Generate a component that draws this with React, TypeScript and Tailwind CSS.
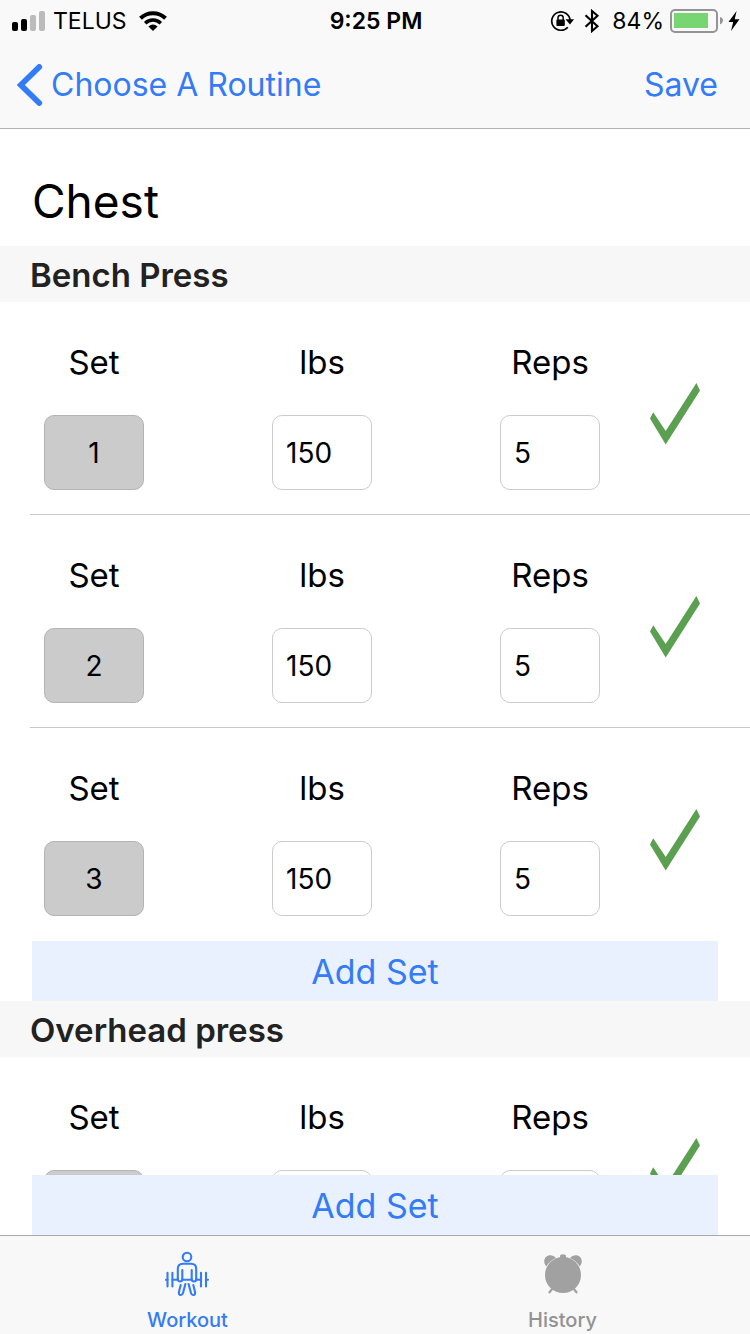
import { useId, useState } from "react";

type WorkoutSet = { weight: string; reps: string };

function SignalBars() {
  return (
    <svg className="h-5 w-[33px]" viewBox="0 0 33 20" aria-hidden="true">
      <rect x="0" y="11" width="6" height="9" rx="2" fill="#000" />
      <rect x="9" y="8" width="6" height="12" rx="2" fill="#000" />
      <rect x="18" y="4" width="6" height="16" rx="2" fill="#bbb" />
      <rect x="27" y="0" width="6" height="20" rx="2" fill="#bbb" />
    </svg>
  );
}

function WifiIcon() {
  return (
    <svg className="h-5 w-7" viewBox="0 0 28 20" fill="none" aria-hidden="true">
      <path d="M1.5 7.2 A18 18 0 0 1 26.5 7.2" stroke="#000" strokeWidth="4" />
      <path d="M6.2 12.2 A11.2 11.2 0 0 1 21.8 12.2" stroke="#000" strokeWidth="3.6" />
      <path d="M9.4 15.4 Q14 11.8 18.6 15.4 L14 20 Z" fill="#000" />
    </svg>
  );
}

function RotationLockIcon() {
  return (
    <svg className="h-[22px] w-6" viewBox="0 0 24 22" fill="none" aria-hidden="true">
      <path d="M17.8 17.2 A9.2 9.2 0 1 1 20.1 10" stroke="#000" strokeWidth="1.7" />
      <path d="M15.5 9.2 H24 L20 14.4 Z" fill="#000" />
      <rect x="6.4" y="9.5" width="8.4" height="6.5" rx="1" fill="#000" />
      <path d="M8 10 V7.8 a2.6 2.6 0 0 1 5.2 0 V10" stroke="#000" strokeWidth="1.5" />
    </svg>
  );
}

function BluetoothIcon() {
  return (
    <svg className="h-6 w-4" viewBox="0 0 16 24" fill="none" aria-hidden="true">
      <path d="M1.5 6.2 L13.5 17.3 L8 22 V2 L13.5 6.7 L1.5 17.8" stroke="#000" strokeWidth="2.1" />
    </svg>
  );
}

function BatteryIcon() {
  return (
    <svg className="h-6 w-[54px]" viewBox="0 0 54 24" fill="none" aria-hidden="true">
      <rect x="1" y="1" width="46" height="22" rx="4" stroke="#949494" strokeWidth="2" />
      <rect x="4" y="4" width="34" height="15" fill="#77d572" />
      <path d="M50 8 Q53 9 53 11.5 Q53 14 50 15.4 Z" fill="#949494" />
    </svg>
  );
}

function BoltIcon() {
  return (
    <svg className="h-5 w-3" viewBox="0 0 12 20" aria-hidden="true">
      <path d="M8.6 0 L0.5 11 H5.2 L3 20 L11.5 8.2 H6.7 Z" fill="#000" />
    </svg>
  );
}

function CheckIcon() {
  return (
    <svg className="h-[62px] w-[50px]" viewBox="0 0 50 62" aria-hidden="true">
      <path d="M3.2 29.2 L0 35.6 L15.7 61.4 L50 7.4 L46.4 0 L15.7 48 Z" fill="#5b9f50" />
    </svg>
  );
}

function WorkoutIcon() {
  return (
    <svg
      className="h-[46px] w-[45px]"
      viewBox="0 0 45 46"
      fill="none"
      stroke="currentColor"
      strokeWidth="2.1"
      strokeLinecap="round"
      strokeLinejoin="round"
      aria-hidden="true"
    >
      <circle cx="22" cy="6" r="4.3" />
      <path d="M12.8 28 V18 Q12.8 12.8 18 12.8 H26 Q31.2 12.8 31.2 18 V28" />
      <path d="M17.3 19 V28 M26.7 19 V28 M17.3 28.8 H26.7" />
      <path d="M12.8 28 Q13 30.5 15 30.5 Q17.3 30.5 17.3 28 M26.7 28 Q26.7 30.5 29 30.5 Q31.2 30.5 31.2 28" />
      <path d="M1 28.8 H2.5 M7.4 28.8 H12.8 M31.2 28.8 H36 M41.2 28.8 H43" />
      <path d="M2.5 21.8 V35.5 M7.4 21.8 V35.5 M36 21.8 V35.5 M41 21.8 V35.5" />
      <path d="M15.7 34 L13.9 41.2 Q13.6 43.8 15.6 44 Q17.4 44.2 18 42 L20.4 33" />
      <path d="M28.3 34 L30.1 41.2 Q30.4 43.8 28.4 44 Q26.6 44.2 26 42 L23.6 33" />
    </svg>
  );
}

function AlarmIcon() {
  return (
    <svg className="h-[40px] w-[38px]" viewBox="0 0 38 40" fill="currentColor" aria-hidden="true">
      <circle cx="19" cy="21" r="18" />
      <path d="M16 4 V2.2 Q16 0.3 19 0.3 Q22 0.3 22 2.2 V4 Z" />
      <path d="M2.2 12.4 C-2 7 1 1.2 6.5 1.2 Q10 1.2 12 4 Q5.8 6.8 2.2 12.4 Z" />
      <path d="M35.8 12.4 C40 7 37 1.2 31.5 1.2 Q28 1.2 26 4 Q32.2 6.8 35.8 12.4 Z" />
      <path d="M8.5 34.5 L5.5 38.3 M29.5 34.5 L32.5 38.3" stroke="currentColor" strokeWidth="2.2" strokeLinecap="round" />
    </svg>
  );
}

function StatusBar() {
  return (
    <div className="flex h-[42px] items-center justify-between pl-3 pr-2.5">
      <div className="flex flex-1 items-center">
        <SignalBars />
        <span className="ml-2 mr-3 text-[23px] leading-10">TELUS</span>
        <WifiIcon />
      </div>
      <time className="text-[23px] font-semibold leading-10">9:25 PM</time>
      <div className="flex flex-1 items-center justify-end">
        <RotationLockIcon />
        <span className="ml-2.5 mr-3 flex">
          <BluetoothIcon />
        </span>
        <span className="mr-1.5 text-[23px] leading-10">84%</span>
        <BatteryIcon />
        <span className="ml-1 flex">
          <BoltIcon />
        </span>
      </div>
    </div>
  );
}

const fieldBase = "h-[75px] w-full rounded-[10px] border text-[28px] text-black";

function SetRow({ index, initial }: { index: number; initial: WorkoutSet }) {
  const id = useId();
  const [weight, setWeight] = useState(initial.weight);
  const [reps, setReps] = useState(initial.reps);
  const [done, setDone] = useState(true);
  return (
    <li className="group ml-[30px]">
      <div className="flex h-[213px] items-start border-b border-[#c8c7cc] pl-3.5 pr-[50px] pt-10 group-last:border-transparent">
        <div className="flex flex-1 justify-between">
          <div className="flex w-[100px] flex-col gap-[33px] text-center">
            <label htmlFor={`${id}-set`} className="text-[33px] leading-10">Set</label>
            <input
              id={`${id}-set`}
              readOnly
              value={index}
              className={`${fieldBase} border-[#b4b4b4] bg-[#cbcbcb] text-center`}
            />
          </div>
          <div className="flex w-[100px] flex-col gap-[33px] text-center">
            <label htmlFor={`${id}-lbs`} className="text-[33px] leading-10">lbs</label>
            <input
              id={`${id}-lbs`}
              inputMode="numeric"
              value={weight}
              onChange={(e) => setWeight(e.target.value)}
              className={`${fieldBase} border-[#cccccc] bg-white px-[13px]`}
            />
          </div>
          <div className="flex w-[100px] flex-col gap-[33px] text-center">
            <label htmlFor={`${id}-reps`} className="text-[33px] leading-10">Reps</label>
            <input
              id={`${id}-reps`}
              inputMode="numeric"
              value={reps}
              onChange={(e) => setReps(e.target.value)}
              className={`${fieldBase} border-[#cccccc] bg-white px-[13px]`}
            />
          </div>
        </div>
        <button
          type="button"
          aria-label={`Set ${index} done`}
          aria-pressed={done}
          onClick={() => setDone(!done)}
          className="ml-[50px] mt-[41px] aria-[pressed=false]:opacity-30"
        >
          <CheckIcon />
        </button>
      </div>
    </li>
  );
}

function SectionHeader({ children }: { children: string }) {
  return (
    <h2 className="shrink-0 bg-[#f7f7f7] pl-[30px] pt-0.5 text-[33px] font-semibold leading-[54px] text-[#222222]">
      {children}
    </h2>
  );
}

function AddSetButton({ onClick }: { onClick: () => void }) {
  return (
    <button
      type="button"
      onClick={onClick}
      className="mx-8 h-[60px] shrink-0 bg-[#e9f1fe] text-[34px] text-[#347bf7]"
    >
      Add Set
    </button>
  );
}

export default function App() {
  const [bench, setBench] = useState<WorkoutSet[]>([
    { weight: "150", reps: "5" },
    { weight: "150", reps: "5" },
    { weight: "150", reps: "5" },
  ]);
  const [press, setPress] = useState<WorkoutSet[]>([{ weight: "95", reps: "5" }]);

  return (
    <div className="flex h-screen flex-col bg-white font-['Inter','Liberation_Sans',sans-serif] text-black">
      <header className="shrink-0 border-b border-[#b2b2b2] bg-[#f9f9f9]">
        <StatusBar />
        <nav className="flex h-[86px] items-center justify-between pl-[17px] pr-8 text-[32px] text-[#347bf7]">
          <a href="#routines" className="flex items-center gap-2">
            <svg className="h-[42px] w-[26px]" viewBox="0 0 26 42" fill="none" aria-hidden="true">
              <path d="M22.2 3 L3.8 21 L22.2 39" stroke="currentColor" strokeWidth="5.8" strokeLinecap="round" strokeLinejoin="miter" />
            </svg>
            Choose A Routine
          </a>
          <button type="button">Save</button>
        </nav>
      </header>

      <main className="flex min-h-0 flex-1 flex-col overflow-hidden">
        <h1 className="shrink-0 px-8 pb-[15px] pt-[42px] text-[46px] leading-[60px]">Chest</h1>
        <SectionHeader>Bench Press</SectionHeader>
        <ul className="shrink-0">
          {bench.map((set, i) => (
            <SetRow key={i} index={i + 1} initial={set} />
          ))}
        </ul>
        <AddSetButton onClick={() => setBench([...bench, { weight: "150", reps: "5" }])} />
        <SectionHeader>Overhead press</SectionHeader>
        <ul className="min-h-0 flex-1 overflow-hidden">
          {press.map((set, i) => (
            <SetRow key={i} index={i + 1} initial={set} />
          ))}
        </ul>
        <AddSetButton onClick={() => setPress([...press, { weight: "95", reps: "5" }])} />
      </main>

      <nav className="grid shrink-0 grid-cols-2 border-t border-[#a9a9b2] bg-[#f8f8f8] pb-0.5 text-[20px] font-medium leading-6">
        <a href="#workout" className="flex flex-col items-center text-[#347bf7]">
          <span className="flex h-[72px] items-center pt-1">
            <WorkoutIcon />
          </span>
          Workout
        </a>
        <a href="#history" className="flex flex-col items-center text-[#929292]">
          <span className="flex h-[72px] items-center pt-1 text-[#a1a1a1]">
            <AlarmIcon />
          </span>
          History
        </a>
      </nav>
    </div>
  );
}
